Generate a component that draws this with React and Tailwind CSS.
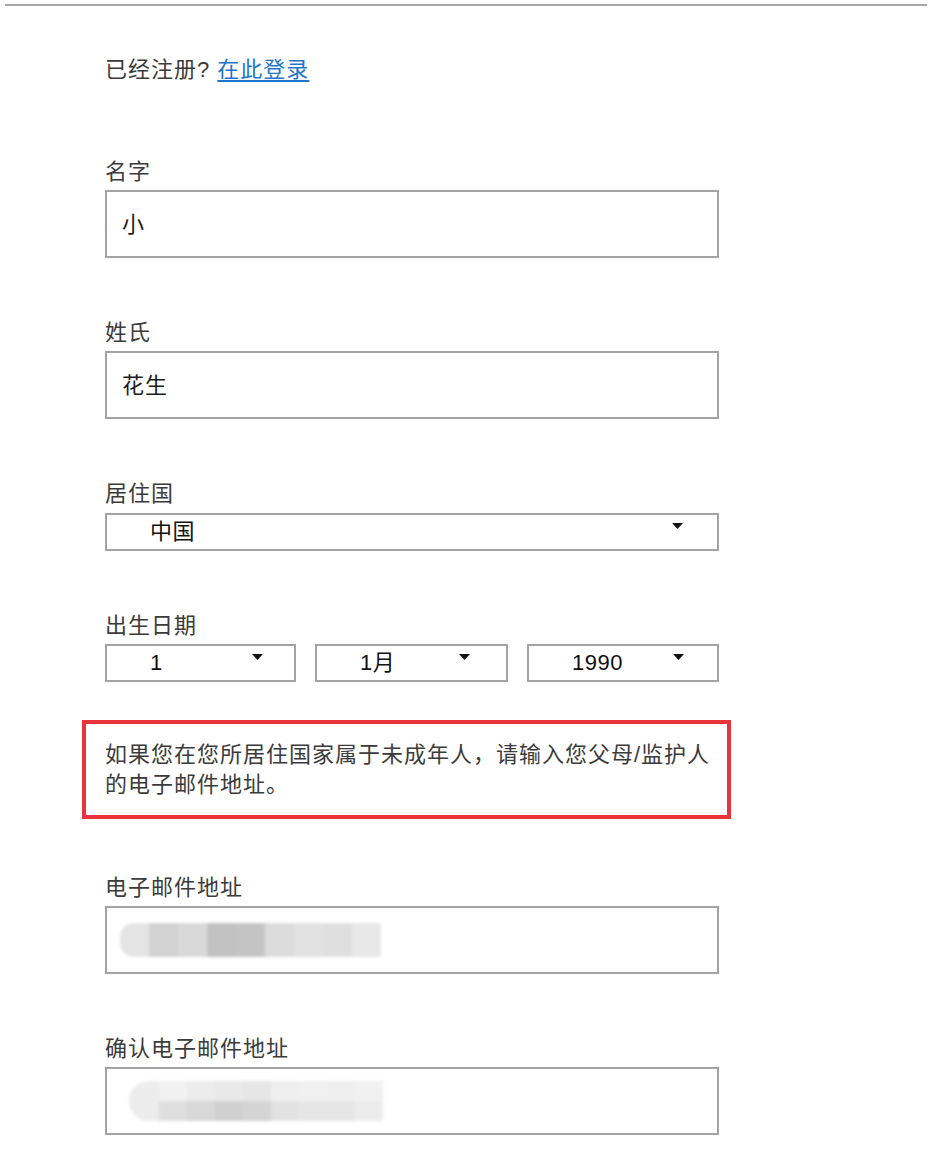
import React from 'react';

const font = "font-['Liberation_Sans','Noto_Sans_CJK_SC',sans-serif]";

const emailBlocks = ["#e4e4e4", "#d2d2d2", "#d9d9d9", "#c2c2c2", "#c4c4c4", "#dcdcdc", "#e1e1e1", "#dfdfdf", "#e8e8e8"];
const confirmTop = ["#f1f1f1", "#ececec", "#e9e9e9", "#e6e6e6", "#efefef", "#f0f0f0", "#efefef", "#f1f1f1"];
const confirmBottom = ["#dedede", "#d8d8d8", "#d0d0d0", "#d4d4d4", "#e2e2e2", "#e6e6e6", "#e6e6e6", "#ececec"];

function Arrow({ className }) {
    return (
        <svg width="11" height="6" viewBox="0 0 11 6" className={className}>
            <path d="M0 0 L11 0 L5.5 6 Z" fill="#111" />
        </svg>
    );
}

function Label({ children }) {
    return <div className="h-[30px] leading-[30px] text-[22px] tracking-[1px] text-[#3b3b3b]">{children}</div>;
}

function TextBox({ children }) {
    return (
        <div className="mt-[3px] h-[68px] w-[614px] border-2 border-[#a3a3a3] flex items-center pl-[15px] text-[22px] tracking-[1px] text-[#1c1c1c]">
            {children}
        </div>
    );
}

function Select({ value, width, arrowRight }) {
    return (
        <div className={`h-[38px] border-2 border-[#a3a3a3] flex justify-between ${width}`}>
            <span className="self-center pl-[43px] text-[22px] leading-[30px] text-[#111] tracking-[0.5px]">{value}</span>
            <Arrow className={`mt-[8px] ${arrowRight}`} />
        </div>
    );
}

function Blurred({ top, bottom, confirm }) {
    if (!confirm) {
        return (
            <div className="flex h-[34px] ml-[-2px] blur-[1.5px]">
                {top.map((c, i) => (
                    <div key={i} className={`w-[29px] h-full ${i === 0 ? 'rounded-l-[14px]' : ''}`} style={{ backgroundColor: c }} />
                ))}
            </div>
        );
    }
    return (
        <div className="flex items-center ml-[7px] blur-[1.5px]">
            <div className="w-[30px] h-[40px] rounded-l-[20px] bg-[#ececec]" />
            <div className="flex flex-col">
                <div className="flex h-[20px]">
                    {top.map((c, i) => (
                        <div key={i} className="w-[28px] h-full" style={{ backgroundColor: c }} />
                    ))}
                </div>
                <div className="flex h-[20px]">
                    {bottom.map((c, i) => (
                        <div key={i} className="w-[28px] h-full" style={{ backgroundColor: c }} />
                    ))}
                </div>
            </div>
        </div>
    );
}

export default function App() {
    return (
        <div className={`w-[938px] min-h-[1161px] bg-white ${font}`}>
            <div className="mt-[4px] ml-[5px] w-[922px] h-[2px] bg-[#a6a6a6]" />
            <div className="ml-[105px] w-[614px]">
                <div className="mt-[49px] h-[30px] leading-[30px] text-[22px] tracking-[1px] text-[#3b3b3b]">
                    已经注册? <a href="#" className="text-[#1f74cc] underline underline-offset-[3px]">在此登录</a>
                </div>

                <div className="mt-[72px]">
                    <Label>名字</Label>
                    <TextBox>小</TextBox>
                </div>

                <div className="mt-[60px]">
                    <Label>姓氏</Label>
                    <TextBox>花生</TextBox>
                </div>

                <div className="mt-[60px]">
                    <Label>居住国</Label>
                    <div className="mt-[4px]">
                        <Select value="中国" width="w-[614px]" arrowRight="mr-[34px]" />
                    </div>
                </div>

                <div className="mt-[60px]">
                    <Label>出生日期</Label>
                    <div className="mt-[3px] flex gap-[19px]">
                        <Select value="1" width="w-[191px]" arrowRight="mr-[31px]" />
                        <Select value="1月" width="w-[193px]" arrowRight="mr-[36px]" />
                        <Select value="1990" width="w-[192px]" arrowRight="mr-[33px]" />
                    </div>
                </div>

                <div className="mt-[38px] -ml-[23px] w-[649px] h-[99px] border-4 border-[#e8333b] pl-[19px] pr-[6px] pt-[16px] text-[22px] leading-[30px] tracking-[1px] text-[#3b3b3b]">
                    如果您在您所居住国家属于未成年人，请输入您父母/监护人的电子邮件地址。
                </div>

                <div className="mt-[54px]">
                    <Label>电子邮件地址</Label>
                    <TextBox>
                        <Blurred top={emailBlocks} />
                    </TextBox>
                </div>

                <div className="mt-[60px]">
                    <Label>确认电子邮件地址</Label>
                    <TextBox>
                        <Blurred top={confirmTop} bottom={confirmBottom} confirm />
                    </TextBox>
                </div>
            </div>
        </div>
    );
}
